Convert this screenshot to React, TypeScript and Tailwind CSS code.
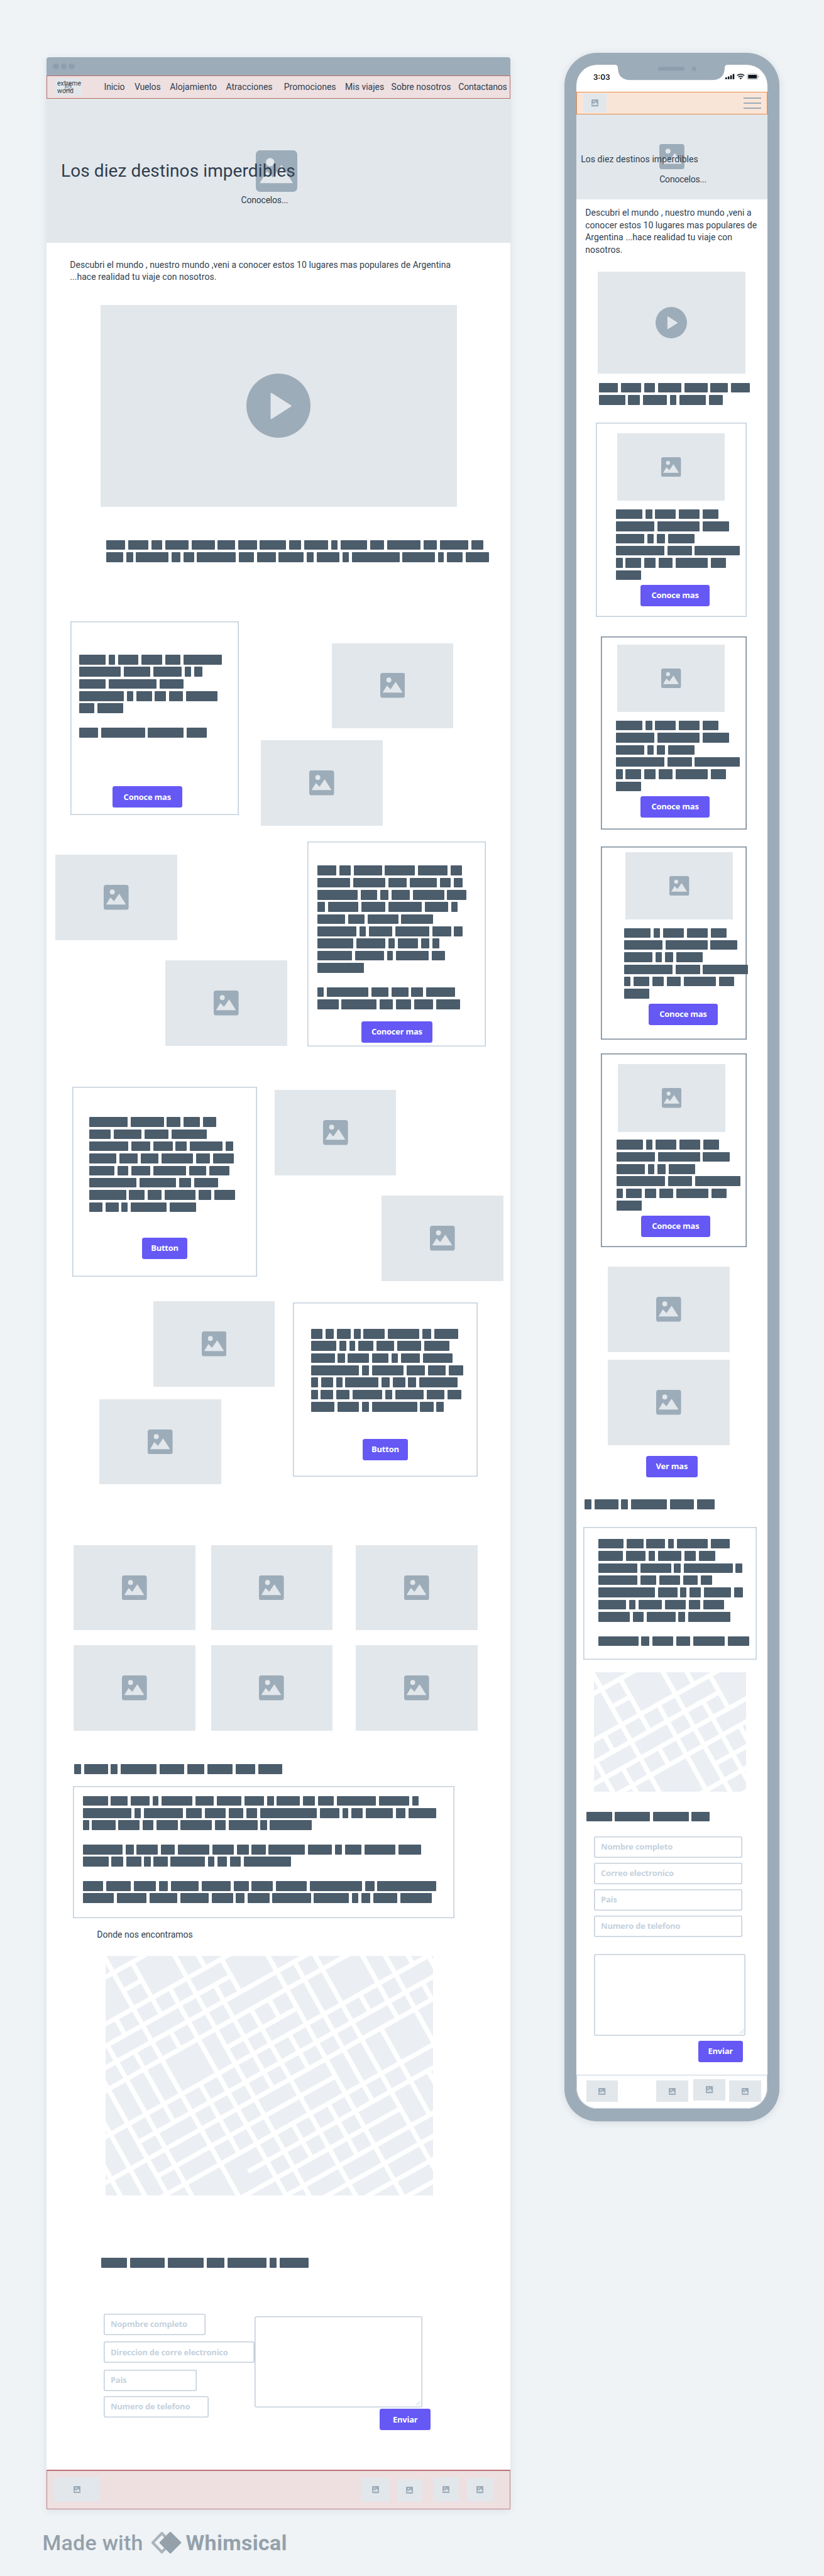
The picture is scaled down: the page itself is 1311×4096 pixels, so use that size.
import React from "react";

type Rows = number[][];

const DESK = 0.48335;
const FORM = 0.49364;
const MOBILE = 0.26876;

/* ---------- redacted copy: one array per line, one number per word ---------- */

const leadRows: Rows = [
  [63, 66, 37, 77, 75, 57, 62, 87, 39, 79, 21, 87, 46, 111, 43, 94, 40],
  [56, 23, 107, 29, 35, 127, 51, 61, 83, 23, 74, 22, 156, 107, 20, 51, 78],
];
const cardARows: Rows = [
  [88, 21, 67, 69, 50, 126],
  [138, 87, 94, 20, 28],
  [87, 159, 79],
  [147, 22, 51, 37, 45, 105],
  [51, 84],
  [],
  [63, 144, 117, 66],
];
const cardBRows: Rows = [
  [63, 37, 93, 99, 97, 39],
  [109, 105, 61, 90, 35, 29],
  [133, 54, 28, 61, 102, 64],
  [26, 99, 80, 109, 78, 21],
  [92, 54, 101, 104],
  [129, 21, 78, 111, 62, 29],
  [118, 97, 21, 66, 28, 23],
  [115, 95, 20, 107, 45],
  [154],
  [],
  [22, 137, 56, 55, 39, 96],
  [70, 115, 45, 50, 62, 78],
];
const cardCRows: Rows = [
  [127, 109, 45, 54, 43],
  [71, 91, 79, 117],
  [129, 63, 63, 37, 108, 24],
  [89, 62, 57, 105, 46, 68],
  [83, 37, 62, 108, 56, 66],
  [156, 121, 39, 79],
  [122, 51, 46, 101, 43, 68],
  [44, 43, 21, 118, 87],
];
const cardDRows: Rows = [
  [37, 28, 45, 23, 70, 104, 29, 78],
  [83, 24, 19, 50, 57, 79, 84],
  [78, 23, 70, 54, 21, 62, 98],
  [157, 23, 105, 60, 59, 47],
  [23, 40, 20, 109, 27, 41, 27, 125],
  [22, 41, 44, 97, 23, 94, 58, 46],
  [77, 71, 23, 148, 44, 23],
];
const aboutTitle: Rows = [[24, 78, 22, 119, 80, 57, 83, 64, 79]];
const aboutRows: Rows = [
  [83, 55, 62, 19, 102, 61, 82, 64, 22, 76, 39, 53, 128, 100, 22],
  [160, 22, 128, 53, 68, 49, 35, 187, 64, 19, 38, 90, 30, 91],
  [21, 77, 70, 35, 70, 103, 36, 94, 21, 137],
  [],
  [132, 26, 69, 46, 104, 72, 38, 46, 120, 79, 23, 54, 102, 74],
  [85, 38, 50, 21, 46, 113, 22, 30, 37, 154],
  [],
  [68, 80, 74, 28, 93, 95, 49, 70, 102, 172, 30, 194],
  [102, 99, 91, 93, 70, 29, 71, 127, 115, 22, 29, 79, 104],
];
const formTitle: Rows = [[84, 112, 116, 57, 126, 22, 95]];

const mLeadRows: Rows = [
  [113, 119, 66, 138, 136, 103, 112],
  [156, 71, 142, 38, 157, 81],
];
const mCardRows: Rows = [
  [157, 39, 122, 125, 92],
  [227, 249, 159],
  [167, 38, 50, 157],
  [287, 144, 265],
  [39, 92, 68, 83, 190, 91],
  [150],
];
const mAboutTitle: Rows = [[42, 139, 39, 213, 144, 104]];
const mAboutRows: Rows = [
  [149, 100, 110, 35, 184, 111],
  [147, 114, 39, 138, 69, 97],
  [231, 182, 40, 289, 41],
  [231, 95, 123, 87, 66],
  [336, 114, 36, 68, 161, 54],
  [165, 39, 138, 124, 65, 126],
  [186, 65, 170, 41, 247],
  [],
  [237, 48, 122, 83, 186, 129],
];
const mFormTitle: Rows = [[153, 206, 212, 106]];

/* ------------------------------- primitives -------------------------------- */

function Redacted({ rows, unit, className = "" }: { rows: Rows; unit: number; className?: string }) {
  return (
    <div className={`flex flex-col gap-[3.75px] ${className}`}>
      {rows.map((words, i) => (
        <div key={i} className="flex h-[15.6px] gap-[4.8px]">
          {words.map((w, j) => (
            <span
              key={j}
              className="h-full shrink-0 rounded-[1px] bg-[#4b5c6b]"
              style={{ width: w * unit }}
            />
          ))}
        </div>
      ))}
    </div>
  );
}

function ImageGlyph({ className }: { className: string }) {
  return (
    <svg viewBox="0 0 100 100" className={`shrink-0 ${className}`}>
      <rect width="100" height="100" rx="10" fill="#9dacb9" />
      <circle cx="34.5" cy="28.5" r="10" fill="#e2e7eb" />
      <path
        d="M11 78 27 52 41.5 67 62 37 88 78Z"
        fill="#e2e7eb"
        stroke="#e2e7eb"
        strokeWidth="2"
        strokeLinejoin="round"
      />
    </svg>
  );
}

function Picture({ className, icon = "size-[39.6px]" }: { className: string; icon?: string }) {
  return (
    <div className={`flex shrink-0 items-center justify-center bg-[#e2e7eb] ${className}`}>
      <ImageGlyph className={icon} />
    </div>
  );
}

function PlayGlyph({ className }: { className: string }) {
  return (
    <svg viewBox="0 0 100 100" className={className}>
      <circle cx="50" cy="50" r="50" fill="#9dacb9" />
      <path
        d="M39 31.5V69.5L69 50.5Z"
        fill="#e2e7eb"
        stroke="#e2e7eb"
        strokeWidth="2.5"
        strokeLinejoin="round"
      />
    </svg>
  );
}

function Button({ children, className }: { children: React.ReactNode; className: string }) {
  return (
    <button
      className={`flex h-[34px] shrink-0 items-center justify-center whitespace-nowrap rounded-[3.5px] bg-[#6558f5] font-['Open_Sans',sans-serif] text-[13px] font-bold tracking-[-0.25px] text-white ${className}`}
    >
      {children}
    </button>
  );
}

function Card({
  children,
  className,
  dark = false,
}: {
  children: React.ReactNode;
  className: string;
  dark?: boolean;
}) {
  const line = dark
    ? "shadow-[inset_0_0_0_1.6px_#788896]"
    : "shadow-[inset_0_0_0_1.6px_#c4d0dc]";
  return <div className={`shrink-0 ${line} ${className}`}>{children}</div>;
}

function Field({ children, className }: { children: React.ReactNode; className: string }) {
  return (
    <div
      className={`flex h-[33.8px] shrink-0 items-center whitespace-nowrap rounded-[3px] pl-[11.4px] font-['Open_Sans',sans-serif] text-[13px] font-bold tracking-[-0.25px] text-[#c6d2dd] shadow-[inset_0_0_0_1.6px_#c4cfdb] ${className}`}
    >
      {children}
    </div>
  );
}

function TextArea({ className }: { className: string }) {
  return (
    <div
      className={`flex shrink-0 items-end justify-end rounded-[3px] p-[2.5px] shadow-[inset_0_0_0_1.6px_#c4cfdb] ${className}`}
    >
      <svg viewBox="0 0 8 8" className="size-[8px]" stroke="#c4cfdb" strokeWidth="1">
        <path d="M0.5 7.5 7.5 0.5M4 7.5 7.5 4" />
      </svg>
    </div>
  );
}

/* --------------------------------- map ------------------------------------- */

/* Streets in a rotated grid: [offset, from, to] */
const avenues = [
  [29.5, -300, 500],
  [62, -2, 31],
  [94.5, -300, 500],
  [125, -300, 158],
  [155, -300, 600],
  [187, -300, 600],
  [221.5, 96, 225],
  [251, -300, 700],
  [284, -100, 700],
  [314.5, -300, 700],
  [346, -100, 225],
  [378, -300, 700],
  [410, 30, 700],
  [441, -300, 290],
  [473, -300, 700],
  [505, 96, 700],
  [537, -300, 700],
  [568, -300, 700],
];
const lanes = [
  [-166, 187, 600],
  [-132, 187, 600],
  [-100, 155, 600],
  [-67, 125, 600],
  [-34.5, 94, 125],
  [-34.5, 155, 284],
  [-2.5, -100, 600],
  [31.5, 29, 125],
  [31.5, 155, 187],
  [31.5, 251, 378],
  [64, 94, 600],
  [96, -100, 600],
  [129, -100, 94],
  [129, 125, 314],
  [129, 378, 441],
  [158.5, 94, 155],
  [160.5, 187, 600],
  [193, 187, 221],
  [194, 251, 314],
  [194, 378, 473],
  [225.5, -100, 600],
  [257.5, 155, 410],
  [290.5, -100, 600],
  [323, 251, 284],
  [326, 314, 473],
  [356.5, -100, 314],
  [358, 410, 600],
  [388, -100, 600],
  [420, -100, 251],
  [419, 284, 314],
  [448, -100, 600],
];

function StreetMap({ width, height, className }: { width: number; height: number; className: string }) {
  return (
    <svg viewBox={`0 0 ${width} ${height}`} className={`shrink-0 bg-[#ebeff4] ${className}`}>
      <g transform="rotate(-29.3)" stroke="#fff" strokeWidth="7.4">
        {avenues.map(([v, a, b], i) => (
          <line key={i} x1={a} x2={b} y1={v} y2={v} />
        ))}
        {lanes.map(([u, a, b], i) => (
          <line key={i} x1={u} x2={u} y1={a} y2={b} />
        ))}
      </g>
    </svg>
  );
}

/* -------------------------------- desktop ---------------------------------- */

const navItems = [
  { label: "Inicio", className: "w-[48.4px] tracking-[-0.15px]" },
  { label: "Vuelos", className: "w-[56.3px] tracking-[-0.15px]" },
  { label: "Alojamiento", className: "w-[89.3px]" },
  { label: "Atracciones", className: "w-[92.3px]" },
  { label: "Promociones", className: "w-[97.3px]" },
  { label: "Mis viajes", className: "w-[73.5px]" },
  { label: "Sobre nosotros", className: "w-[106.7px]" },
  { label: "Contactanos", className: "w-[80px] tracking-[-0.2px]" },
];

const TILE = "h-[135.5px] w-[193.5px]";

function Desktop() {
  return (
    <main className="mt-[91px] ml-[74px] flex h-[3898.5px] w-[738px] shrink-0 flex-col overflow-hidden rounded-t-[4px] bg-white shadow-[0_2px_12px_rgba(60,80,100,0.12)]">
      <div className="flex h-[29px] shrink-0 items-center gap-[2.9px] bg-[#9dacb9] pl-[10px]">
        <span className="size-[9.8px] rounded-full bg-[#8e9eac]" />
        <span className="size-[9.8px] rounded-full bg-[#8e9eac]" />
        <span className="size-[9.8px] rounded-full bg-[#8e9eac]" />
      </div>

      <nav className="flex h-[37px] shrink-0 items-center border border-[#b96a69] bg-[#eedfe0] pl-[12px] text-[14px] text-[#2f3e4e]">
        <div className="relative flex h-[27.7px] w-[42.5px] shrink-0 items-center justify-center bg-[#e2e7eb]">
          <ImageGlyph className="size-[11.5px]" />
          <p className="absolute top-[2px] left-[4px] text-[10.5px] leading-[12.8px]">
            extreme
            <br />
            world
          </p>
        </div>
        <ul className="ml-[36px] flex whitespace-nowrap">
          {navItems.map((item) => (
            <li key={item.label} className={`shrink-0 ${item.className}`}>
              {item.label}
            </li>
          ))}
        </ul>
      </nav>

      <header className="relative flex h-[229px] shrink-0 items-center justify-center bg-[#e2e7eb] pr-[6px]">
        <ImageGlyph className="size-[66px]" />
        <div className="absolute top-[96px] left-[23px] text-[#2f3e4e]">
          <h1 className="text-[28px] leading-[38px] tracking-[0.09px] whitespace-nowrap">Los diez destinos imperdibles</h1>
          <p className="mt-[17.5px] ml-[286.5px] text-[14px] leading-[19.35px] tracking-[-0.2px]">Conocelos...</p>
        </div>
      </header>

      <p className="mt-[25.5px] ml-[37.2px] shrink-0 text-[14px] leading-[19.35px] tracking-[0.05px] whitespace-nowrap text-[#2f3e4e]">
        Descubri el mundo , nuestro mundo ,veni a conocer estos 10 lugares mas populares de Argentina
        <br />
        ...hace realidad tu viaje con nosotros.
      </p>

      <div className="mt-[34.8px] ml-[85.5px] flex h-[321px] w-[567px] shrink-0 items-center justify-center bg-[#e2e7eb]">
        <PlayGlyph className="size-[102px]" />
      </div>

      <Redacted rows={leadRows} unit={DESK} className="mt-[52.6px] ml-[94.7px]" />

      <section className="mt-[94.1px] flex h-[325.1px] shrink-0 pl-[38.2px]">
        <Card className="h-[308.4px] w-[268.3px] pt-[53.3px] pl-[13.5px]">
          <Redacted rows={cardARows} unit={DESK} />
          <Button className="mt-[77.9px] ml-[53.2px] w-[110.7px]">Conoce mas</Button>
        </Card>
        <div className="flex flex-col pt-[34.9px] pl-[34.8px]">
          <Picture className={`${TILE} ml-[112.6px]`} />
          <Picture className={`${TILE} mt-[19.2px]`} />
        </div>
      </section>

      <section className="mt-[25.7px] flex h-[325.2px] shrink-0 pl-[14px]">
        <div className="flex w-[401.2px] shrink-0 flex-col pt-[21px]">
          <Picture className={TILE} />
          <Picture className={`${TILE} mt-[32.2px] ml-[175px]`} />
        </div>
        <Card className="h-[325.2px] w-[284.2px] pt-[37.9px] pl-[15.5px]">
          <Redacted rows={cardBRows} unit={DESK} />
          <Button className="mt-[19.1px] ml-[70.1px] w-[113.1px]">Conocer mas</Button>
        </Card>
      </section>

      <section className="mt-[64.3px] flex h-[308.8px] shrink-0 pl-[40.6px]">
        <Card className="h-[302.4px] w-[294.8px] pt-[48.3px] pl-[27.1px]">
          <Redacted rows={cardCRows} unit={DESK} />
          <Button className="mt-[40.8px] ml-[84.1px] w-[72.5px]">Button</Button>
        </Card>
        <div className="flex flex-col pt-[5.6px] pl-[27.6px]">
          <Picture className={TILE} />
          <Picture className={`${TILE} mt-[32.1px] ml-[170.1px]`} />
        </div>
      </section>

      <section className="mt-[32.4px] flex h-[290.7px] shrink-0 pl-[84.1px]">
        <div className="flex w-[307.9px] shrink-0 flex-col">
          <Picture className={`${TILE} ml-[85.6px]`} />
          <Picture className={`${TILE} mt-[20px]`} />
        </div>
        <Card className="mt-[2.1px] h-[276.5px] w-[294.4px] pt-[41.9px] pl-[29px]">
          <Redacted rows={cardDRows} unit={DESK} />
          <Button className="mt-[43.2px] ml-[81.7px] w-[72.5px]">Button</Button>
        </Card>
      </section>

      <section className="mt-[96.8px] ml-[43px] grid shrink-0 grid-cols-[218.5px_230.5px_193.5px] gap-y-[24px]">
        {[0, 1, 2, 3, 4, 5].map((n) => (
          <Picture key={n} className={TILE} />
        ))}
      </section>

      <Redacted rows={aboutTitle} unit={DESK} className="mt-[53.5px] ml-[43.5px]" />
      <Card className="mt-[18.9px] ml-[42px] h-[210.6px] w-[607px] pt-[16.2px] pl-[15.5px]">
        <Redacted rows={aboutRows} unit={DESK} />
      </Card>

      <p className="mt-[17px] ml-[80.3px] shrink-0 text-[14px] leading-[19.35px] text-[#2f3e4e]">Donde nos encontramos</p>
      <StreetMap width={521} height={381.7} className="mt-[23.3px] ml-[93.6px] h-[381.7px] w-[521px]" />

      <Redacted rows={formTitle} unit={FORM} className="mt-[98.9px] ml-[86.6px]" />

      <form className="mt-[72.8px] flex shrink-0 pl-[90.5px]">
        <div className="flex w-[240.5px] shrink-0 flex-col">
          <Field className="w-[162.4px]">Nopmbre completo</Field>
          <Field className="mt-[10.9px] w-[240.9px]">Direccion de corre electronico</Field>
          <Field className="mt-[11px] w-[148.1px]">Pais</Field>
          <Field className="mt-[8.3px] w-[167.9px]">Numero de telefono</Field>
        </div>
        <div className="flex w-[280.5px] shrink-0 flex-col pt-[4.6px]">
          <TextArea className="h-[144.5px] w-[266.6px]" />
          <Button className="mt-[2.6px] ml-[199px] w-[81.4px]">Enviar</Button>
        </div>
      </form>

      <footer className="mt-auto flex h-[63px] shrink-0 items-end border border-t-2 border-[#c08080] border-t-[#b97072] bg-[#eedfe0] pr-[26px] pb-[10.8px] pl-[10.6px]">
        <Picture className="mr-auto h-[38.8px] w-[73.5px]" icon="size-[11.4px]" />
        <Picture className="h-[37.5px] w-[45.9px]" icon="size-[11.2px]" />
        <Picture className="ml-[11.3px] h-[35.9px] w-[40.5px]" icon="size-[11.2px]" />
        <Picture className="ml-[17.3px] h-[38.5px] w-[41px]" icon="size-[11.2px]" />
        <Picture className="ml-[12.3px] h-[37.5px] w-[42.4px]" icon="size-[11.2px]" />
      </footer>
    </main>
  );
}

/* --------------------------------- phone ----------------------------------- */

function StatusBar() {
  return (
    <div className="relative flex h-[43px] shrink-0 items-start justify-between pt-[12px] pr-[13px] pl-[26.5px]">
      <span className="font-['Inter',sans-serif] text-[12px] leading-[15px] font-semibold text-[#10171e]">3:03</span>
      <svg viewBox="0 0 180 26" className="absolute top-[-1px] left-[61.2px] h-[26px] w-[180px]">
        <path d="M0 1Q5 1 5 6Q5.500 25.200 25 25.200H155Q174.500 25.200 175 6Q175 1 180 1V0H0Z" fill="#9dacb9" />
        <rect x="68.700" y="4.300" width="42.500" height="6" rx="3" fill="#8e9eac" />
        <circle cx="126.200" cy="7.300" r="3.600" fill="#8e9eac" />
      </svg>
      <svg viewBox="0 0 54 10" className="mt-[2px] h-[10px] w-[54px] fill-[#10171e]">
        <rect x="0" y="6" width="2.600" height="3" rx="0.600" />
        <rect x="3.900" y="4.500" width="2.600" height="4.500" rx="0.600" />
        <rect x="7.800" y="2.700" width="2.600" height="6.300" rx="0.600" />
        <rect x="11.700" y="0.500" width="2.600" height="8.500" rx="0.600" />
        <g fill="none" stroke="#10171e" strokeWidth="1.500">
          <path d="M18.800 3.200Q24.500 -1.300 30.200 3.200" />
          <path d="M20.900 5.600Q24.500 2.600 28.100 5.600" />
        </g>
        <path d="M22.600 7.300Q24.500 5.900 26.400 7.300L24.500 9.200Z" />
        <rect x="35" y="0.700" width="16.400" height="8.400" rx="2" fill="none" stroke="#9aa0a6" strokeWidth="0.900" />
        <rect x="36.300" y="2" width="13.800" height="5.800" rx="0.900" />
        <rect x="52.300" y="3.500" width="1.100" height="2.800" rx="0.500" fill="#9aa0a6" />
      </svg>
    </div>
  );
}

function MobileCardBody({ gap }: { gap: string }) {
  return (
    <>
      <Picture className="ml-[2.4px] h-[107.8px] w-[171px]" icon="size-[31.4px]" />
      <Redacted rows={mCardRows} unit={MOBILE} className={gap} />
      <Button className="mt-[8px] ml-[38.7px] w-[110.5px]">Conoce mas</Button>
    </>
  );
}

function Phone() {
  return (
    <aside className="mt-[84px] ml-[86px] h-[3288.6px] w-[342px] shrink-0 rounded-[52px] bg-[#9dacb9] p-[19.2px] shadow-[0_2px_12px_rgba(60,80,100,0.14)]">
      <div className="flex h-full w-full flex-col overflow-hidden rounded-[33px] bg-white">
        <StatusBar />

        <div className="flex h-[35.6px] shrink-0 items-center justify-between border border-[#e98b46] bg-[#f9e5d8] pr-[9px] pl-[9.5px]">
          <Picture className="h-[29.3px] w-[37.1px]" icon="size-[11.3px]" />
          <div className="flex w-[27.4px] flex-col gap-[6.4px]">
            <span className="h-[1.8px] bg-[#9dacb9]" />
            <span className="h-[1.8px] bg-[#9dacb9]" />
            <span className="h-[1.8px] bg-[#9dacb9]" />
          </div>
        </div>

        <header className="relative flex h-[135.2px] shrink-0 items-center justify-center bg-[#e2e7eb]">
          <ImageGlyph className="size-[39.9px]" />
          <div className="absolute top-[62px] left-[7px] text-[14px] leading-[19.35px] whitespace-nowrap text-[#2f3e4e]">
            <h2 className="tracking-[0.05px]">Los diez destinos imperdibles</h2>
            <p className="mt-[13px] ml-[125px] tracking-[-0.2px]">Conocelos...</p>
          </div>
        </header>

        <p className="mt-[12.5px] ml-[14px] shrink-0 text-[14px] leading-[19.35px] tracking-[0.04px] whitespace-nowrap text-[#2f3e4e]">
          Descubri el mundo , nuestro mundo ,veni a
          <br />
          conocer estos 10 lugares mas populares de
          <br />
          Argentina ...hace realidad tu viaje con
          <br />
          nosotros.
        </p>

        <div className="mt-[25.4px] ml-[33.9px] flex h-[161.4px] w-[234.6px] shrink-0 items-center justify-center bg-[#e2e7eb]">
          <PlayGlyph className="size-[50px]" />
        </div>
        <Redacted rows={mLeadRows} unit={MOBILE} className="mt-[15.2px] ml-[35.5px]" />

        <Card className="mt-[28.6px] ml-[30.7px] h-[308.3px] w-[240.2px] pt-[16.2px] pl-[32.2px]">
          <MobileCardBody gap="mt-[13.5px]" />
        </Card>
        <Card dark className="mt-[31px] ml-[38.7px] h-[307.7px] w-[232.2px] pt-[12.9px] pl-[24.2px]">
          <MobileCardBody gap="mt-[13.5px]" />
        </Card>
        <Card dark className="mt-[26.4px] ml-[38.7px] h-[307.4px] w-[232.2px] pt-[8.8px] pl-[37.1px]">
          <MobileCardBody gap="mt-[13.2px]" />
        </Card>
        <Card dark className="mt-[22.3px] ml-[38.7px] h-[307.4px] w-[232.2px] pt-[16.5px] pl-[25px]">
          <MobileCardBody gap="mt-[12.7px]" />
        </Card>

        <Picture className={`${TILE} mt-[31.6px] ml-[50px]`} />
        <Picture className={`${TILE} mt-[12.6px] ml-[50px]`} />
        <Button className="mt-[16.9px] ml-[110.5px] w-[82.2px]">Ver mas</Button>

        <Redacted rows={mAboutTitle} unit={MOBILE} className="mt-[35.2px] ml-[12.9px]" />
        <Card className="mt-[28.5px] ml-[11.3px] h-[211px] w-[275.8px] pt-[18.7px] pl-[23.4px]">
          <Redacted rows={mAboutRows} unit={MOBILE} />
        </Card>
        <StreetMap width={242} height={190} className="mt-[19.8px] ml-[28.3px] h-[190px] w-[242px]" />

        <Redacted rows={mFormTitle} unit={MOBILE} className="mt-[31.7px] ml-[15.4px]" />
        <form className="mt-[24.1px] ml-[27.5px] flex shrink-0 flex-col gap-[8.2px]">
          <Field className="w-[236.2px]">Nombre completo</Field>
          <Field className="w-[236.2px]">Correo electronico</Field>
          <Field className="w-[236.2px]">Pais</Field>
          <Field className="w-[236.2px]">Numero de telefono</Field>
          <TextArea className="mt-[18.6px] h-[130px] w-[241.8px]" />
          <Button className="ml-[166px] w-[71px]">Enviar</Button>
        </form>

        <footer className="mt-auto flex h-[54.6px] shrink-0 items-start rounded-b-[33px] border border-[#c4d0dc] pt-[8.6px] pl-[14.4px]">
          <Picture className="h-[34px] w-[50.8px]" icon="size-[11.3px]" />
          <Picture className="ml-[60.4px] h-[34px] w-[50.8px]" icon="size-[11.3px]" />
          <Picture className="-mt-[2.4px] ml-[8.9px] h-[34px] w-[50.8px]" icon="size-[11.3px]" />
          <Picture className="ml-[5.6px] h-[34px] w-[50.8px]" icon="size-[11.3px]" />
        </footer>
      </div>
    </aside>
  );
}

export default function App() {
  return (
    <div className="flex h-[4096px] w-[1311px] flex-col overflow-hidden bg-[#eff3f6] font-['Roboto',sans-serif]">
      <div className="flex h-[3989.5px] shrink-0 items-start">
        <Desktop />
        <Phone />
      </div>
      <div className="mt-[29px] ml-[67.5px] flex items-center whitespace-nowrap text-[#94a1ab]">
        <span className="w-[172px] shrink-0 text-[34px] leading-[48px] font-medium tracking-[0.25px]">Made with</span>
        <svg viewBox="0 0 49 36" className="h-[36px] w-[49px] shrink-0">
          <path d="M17.500 3 3 18l14.500 15L32 18Z" fill="none" stroke="#a9b4bc" strokeWidth="4.200" strokeLinejoin="round" />
          <path d="M31 2 15 18l16 16 16-16Z" fill="#94a1ab" stroke="#94a1ab" strokeWidth="2.500" strokeLinejoin="round" />
        </svg>
        <span className="ml-[7px] text-[34px] leading-[48px] font-bold tracking-[0.3px]">Whimsical</span>
      </div>
    </div>
  );
}
